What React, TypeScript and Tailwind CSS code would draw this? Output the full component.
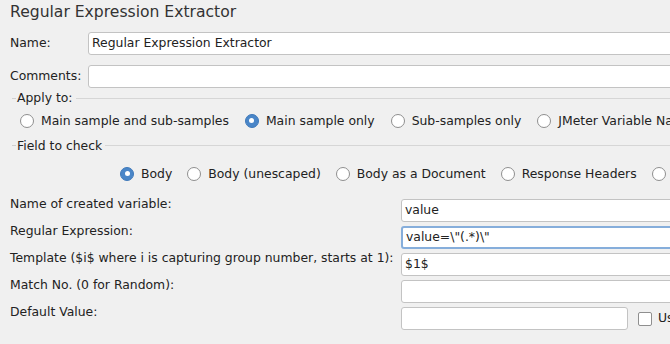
import React from "react";

function Radio({ checked, label }: { checked?: boolean; label: string }) {
	return (
		<div className="flex items-center gap-[7px] shrink-0">
			{checked ? (
				<span className="w-[14px] h-[14px] rounded-full bg-[#4a86c8] border border-[#3f79ba] flex items-center justify-center shrink-0">
					<span className="w-[5px] h-[5px] rounded-full bg-white" />
				</span>
			) : (
				<span className="w-[14px] h-[14px] rounded-full bg-white border border-[#8f8f8f] shrink-0" />
			)}
			<span className="whitespace-nowrap">{label}</span>
		</div>
	);
}

function Legend({ text }: { text: string }) {
	return (
		<div className="flex items-center">
			<div className="ml-[12px] w-[4px] h-px bg-[#cfcfcf]" />
			<span className="ml-[1px] whitespace-nowrap">{text}</span>
			<div className="ml-[3px] flex-1 h-px bg-[#d6d6d6]" />
		</div>
	);
}

function Field({ value, className, focused }: { value?: string; className?: string; focused?: boolean }) {
	return (
		<div
			className={
				"h-[23px] rounded-[3px] bg-white flex items-center pl-[3px] whitespace-nowrap shrink-0 " +
				(focused ? "border-2 border-[#86aedb] pl-[2px] " : "border border-[#c3c3c3] ") +
				(className ?? "")
			}
		>
			{value}
		</div>
	);
}

const rows = [
	{ label: "Name of created variable:", value: "value" },
	{ label: "Regular Expression:", value: 'value=\\"(.*)\\"', focused: true },
	{ label: "Template ($i$ where i is capturing group number, starts at 1):", value: "$1$" },
	{ label: "Match No. (0 for Random):", value: "" },
];

export default function App() {
	return (
		<div className="w-[670px] h-[344px] overflow-hidden bg-[#f0f0f0] text-[#222] text-[12.4px] font-['DejaVu_Sans',sans-serif]">
			<div className="h-[26px] flex items-center pl-[10px] text-[15.6px] text-[#333]">
				Regular Expression Extractor
			</div>

			<div className="mt-[6px] flex items-center">
				<span className="w-[88px] pl-[10px] shrink-0 whitespace-nowrap">Name:</span>
				<Field value="Regular Expression Extractor" className="w-[600px] h-[22px]" />
			</div>
			<div className="mt-[10px] flex items-center">
				<span className="w-[88px] pl-[10px] shrink-0 whitespace-nowrap">Comments:</span>
				<Field className="w-[600px] h-[22px]" />
			</div>

			<div className="h-[21px] flex flex-col justify-center">
				<Legend text="Apply to:" />
			</div>
			<div className="h-[24px] flex items-center gap-[16px] pl-[20px]">
				<Radio label="Main sample and sub-samples" />
				<Radio checked label="Main sample only" />
				<Radio label="Sub-samples only" />
				<Radio label="JMeter Variable Name to use" />
			</div>

			<div className="h-[26px] flex flex-col justify-center">
				<Legend text="Field to check" />
			</div>
			<div className="mt-[3px] h-[24px] flex items-center gap-[15px] pl-[120px]">
				<Radio checked label="Body" />
				<Radio label="Body (unescaped)" />
				<Radio label="Body as a Document" />
				<Radio label="Response Headers" />
				<Radio label="Request Headers" />
			</div>

			<div className="mt-[13px] flex flex-col gap-[4px]">
				{rows.map((r, i) => (
					<div key={i} className="flex items-start">
						<span className="w-[391px] ml-[10px] -mt-[2px] leading-[14px] shrink-0 whitespace-nowrap">{r.label}</span>
						<Field value={r.value} focused={r.focused} className="w-[280px]" />
					</div>
				))}
				<div className="flex items-start">
					<span className="w-[391px] ml-[10px] -mt-[2px] leading-[14px] shrink-0">Default Value:</span>
					<Field className="w-[227px]" />
					<div className="h-[23px] flex items-center">
						<span className="ml-[10px] w-[14px] h-[14px] rounded-[2px] bg-white border border-[#8f8f8f] shrink-0" />
						<span className="ml-[6px] whitespace-nowrap">Use empty default value</span>
					</div>
				</div>
			</div>
		</div>
	);
}
